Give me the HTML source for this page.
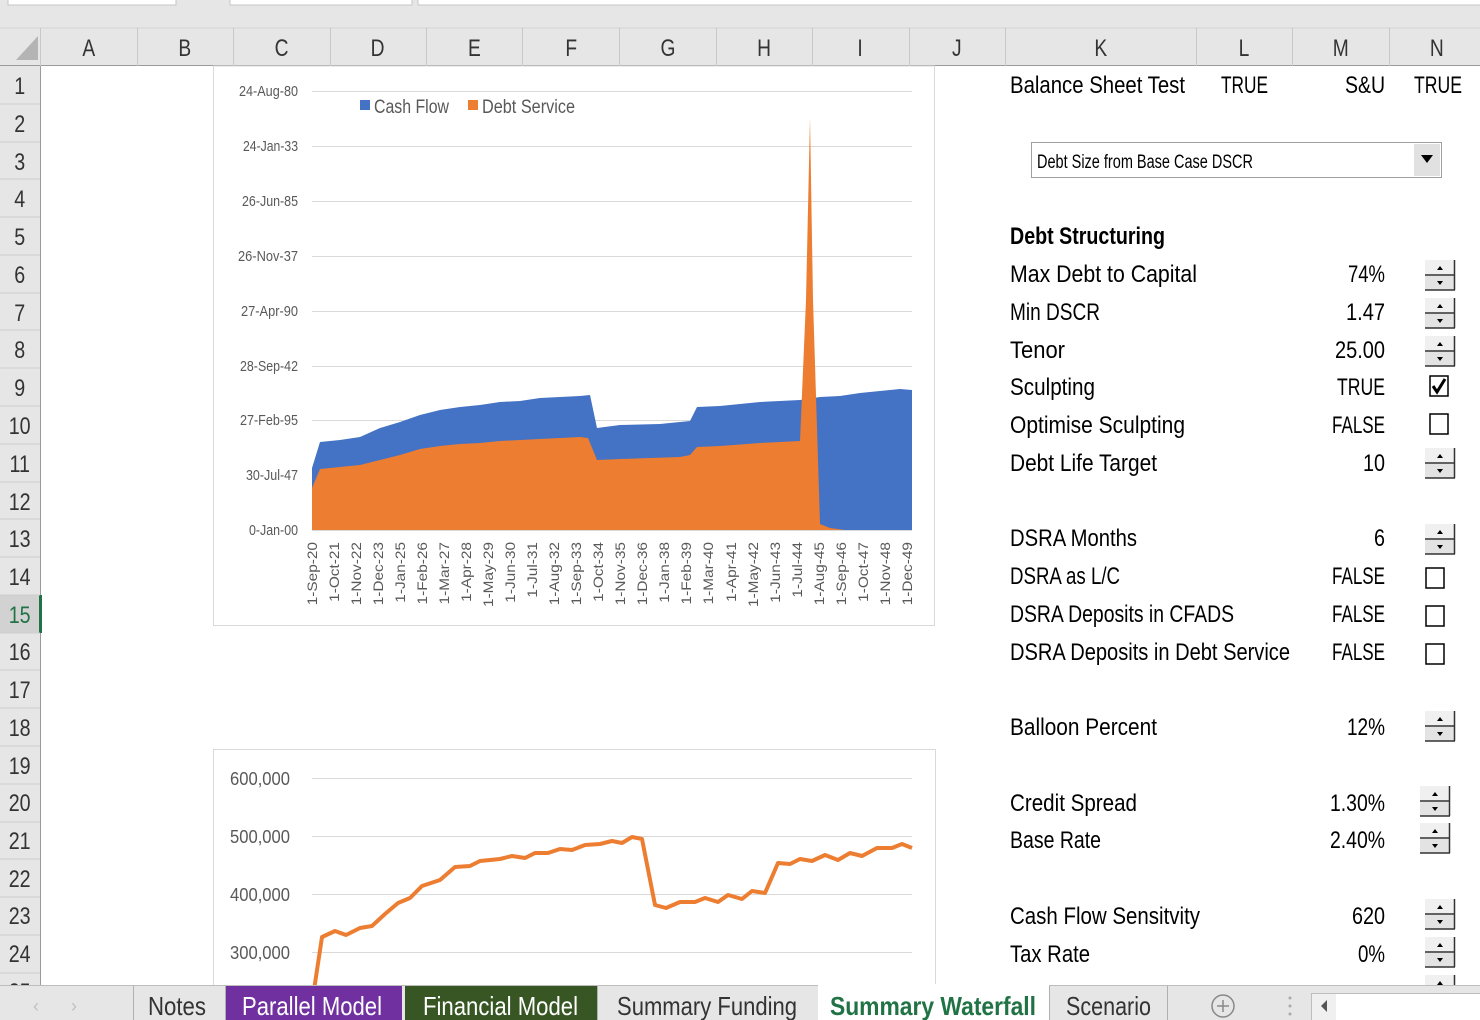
<!DOCTYPE html>
<html><head><meta charset="utf-8"><style>
html,body{margin:0;padding:0;width:1480px;height:1020px;overflow:hidden;background:#fff}
svg{display:block}
text{font-family:"Liberation Sans Narrow","Liberation Sans",sans-serif}
</style></head><body>
<svg width="1480" height="1020" viewBox="0 0 1480 1020" xmlns="http://www.w3.org/2000/svg">
<rect x="0" y="0" width="1480" height="66" fill="#e6e6e6"/>
<rect x="8" y="-2" width="168" height="7" fill="#fff" stroke="#c6c6c6"/>
<rect x="230" y="-2" width="182" height="7" fill="#fff" stroke="#c6c6c6"/>
<rect x="418" y="-2" width="1070" height="7" fill="#fff" stroke="#c6c6c6"/>
<line x1="0" y1="28" x2="1480" y2="28" stroke="#d4d4d4"/>
<line x1="0" y1="65.5" x2="1480" y2="65.5" stroke="#9b9b9b"/>
<polygon points="38,36 38,60 16,60" fill="#b4b4b4"/>
<g stroke="#c8c8c8">
<line x1="40.5" y1="28" x2="40.5" y2="66"/><line x1="137.5" y1="28" x2="137.5" y2="66"/><line x1="233.5" y1="28" x2="233.5" y2="66"/><line x1="330.5" y1="28" x2="330.5" y2="66"/><line x1="426.5" y1="28" x2="426.5" y2="66"/><line x1="522.5" y1="28" x2="522.5" y2="66"/><line x1="619.5" y1="28" x2="619.5" y2="66"/><line x1="716.5" y1="28" x2="716.5" y2="66"/><line x1="812.5" y1="28" x2="812.5" y2="66"/><line x1="909.5" y1="28" x2="909.5" y2="66"/><line x1="1005.5" y1="28" x2="1005.5" y2="66"/><line x1="1196.5" y1="28" x2="1196.5" y2="66"/><line x1="1292.5" y1="28" x2="1292.5" y2="66"/><line x1="1389.5" y1="28" x2="1389.5" y2="66"/>
</g>
<g font-size="24" fill="#333" text-anchor="middle" transform="scale(0.8,1)">
<text x="111" y="56">A</text><text x="231" y="56">B</text><text x="352" y="56">C</text><text x="472" y="56">D</text><text x="593" y="56">E</text><text x="714" y="56">F</text><text x="835" y="56">G</text><text x="955" y="56">H</text><text x="1075" y="56">I</text><text x="1196" y="56">J</text><text x="1376" y="56">K</text><text x="1555" y="56">L</text><text x="1676" y="56">M</text><text x="1796" y="56">N</text>
</g>
<rect x="0" y="66" width="40" height="920" fill="#e6e6e6"/>
<rect x="0" y="595" width="40" height="38" fill="#d2d2d2"/>
<line x1="40.5" y1="66" x2="40.5" y2="986" stroke="#9b9b9b"/>
<rect x="39" y="595" width="3" height="38" fill="#217346"/>
<g stroke="#cfcfcf">
<line x1="0" y1="104" x2="40" y2="104"/><line x1="0" y1="142" x2="40" y2="142"/><line x1="0" y1="179" x2="40" y2="179"/><line x1="0" y1="217" x2="40" y2="217"/><line x1="0" y1="255" x2="40" y2="255"/><line x1="0" y1="293" x2="40" y2="293"/><line x1="0" y1="330" x2="40" y2="330"/><line x1="0" y1="368" x2="40" y2="368"/><line x1="0" y1="406" x2="40" y2="406"/><line x1="0" y1="444" x2="40" y2="444"/><line x1="0" y1="482" x2="40" y2="482"/><line x1="0" y1="519" x2="40" y2="519"/><line x1="0" y1="557" x2="40" y2="557"/><line x1="0" y1="595" x2="40" y2="595"/><line x1="0" y1="633" x2="40" y2="633"/><line x1="0" y1="670" x2="40" y2="670"/><line x1="0" y1="708" x2="40" y2="708"/><line x1="0" y1="746" x2="40" y2="746"/><line x1="0" y1="784" x2="40" y2="784"/><line x1="0" y1="822" x2="40" y2="822"/><line x1="0" y1="859" x2="40" y2="859"/><line x1="0" y1="897" x2="40" y2="897"/><line x1="0" y1="935" x2="40" y2="935"/><line x1="0" y1="973" x2="40" y2="973"/>
</g>
<g font-size="24" fill="#333" text-anchor="middle" transform="scale(0.82,1)">
<text x="24" y="94">1</text><text x="24" y="132">2</text><text x="24" y="170">3</text><text x="24" y="207">4</text><text x="24" y="245">5</text><text x="24" y="283">6</text><text x="24" y="321">7</text><text x="24" y="358">8</text><text x="24" y="396">9</text><text x="24" y="434">10</text><text x="24" y="472">11</text><text x="24" y="510">12</text><text x="24" y="547">13</text><text x="24" y="585">14</text><text x="24" y="623" fill="#217346">15</text><text x="24" y="660">16</text><text x="24" y="698">17</text><text x="24" y="736">18</text><text x="24" y="774">19</text><text x="24" y="811">20</text><text x="24" y="849">21</text><text x="24" y="887">22</text><text x="24" y="924">23</text><text x="24" y="962">24</text><text x="24" y="1000">25</text>
</g>

<rect x="213.5" y="66" width="721" height="559.5" fill="#fff" stroke="#d9d9d9"/>
<g stroke="#d9d9d9"><line x1="312" y1="91.5" x2="912" y2="91.5"/><line x1="312" y1="146.5" x2="912" y2="146.5"/><line x1="312" y1="201.5" x2="912" y2="201.5"/><line x1="312" y1="256.5" x2="912" y2="256.5"/><line x1="312" y1="311.5" x2="912" y2="311.5"/><line x1="312" y1="366.5" x2="912" y2="366.5"/><line x1="312" y1="420.5" x2="912" y2="420.5"/><line x1="312" y1="475.5" x2="912" y2="475.5"/><line x1="312" y1="530.5" x2="912" y2="530.5"/></g>
<g font-size="15" fill="#595959" lengthAdjust="spacingAndGlyphs">
<text x="239" y="96" textLength="59" lengthAdjust="spacingAndGlyphs">24-Aug-80</text><text x="243" y="151" textLength="55" lengthAdjust="spacingAndGlyphs">24-Jan-33</text><text x="242" y="206" textLength="56" lengthAdjust="spacingAndGlyphs">26-Jun-85</text><text x="238" y="261" textLength="60" lengthAdjust="spacingAndGlyphs">26-Nov-37</text><text x="241" y="316" textLength="57" lengthAdjust="spacingAndGlyphs">27-Apr-90</text><text x="240" y="371" textLength="58" lengthAdjust="spacingAndGlyphs">28-Sep-42</text><text x="240" y="425" textLength="58" lengthAdjust="spacingAndGlyphs">27-Feb-95</text><text x="246" y="480" textLength="52" lengthAdjust="spacingAndGlyphs">30-Jul-47</text><text x="249" y="535" textLength="49" lengthAdjust="spacingAndGlyphs">0-Jan-00</text>
</g>
<rect x="360" y="100" width="10" height="10" fill="#4472c4"/><text x="374" y="113" font-size="19" fill="#595959" textLength="75" lengthAdjust="spacingAndGlyphs">Cash Flow</text>
<rect x="468" y="100" width="10" height="10" fill="#ed7d31"/><text x="482" y="113" font-size="19" fill="#595959" textLength="93" lengthAdjust="spacingAndGlyphs">Debt Service</text>
<polygon fill="#4472c4" points="312,530 312,468 320,442 340,440 360,437 380,428 400,422 420,415 440,410 460,407 480,405 500,402 520,401 540,398 560,397 580,396 590,395 597,428 620,425 660,424 690,421 697,407 720,406 760,402 800,400 820,397 840,396 860,393 880,391 900,389 912,390 912,530"/>
<polygon fill="#ed7d31" points="312,530 312,488 320,469 340,467 360,465 380,460 400,455 420,449 440,446 460,444 480,443 500,441 520,440 540,439 560,438 580,437 588,438 597,460 620,459 650,458 680,457 690,455 697,447 720,446 760,443 800,441 806,300 810,118 813,300 820,524 830,528 845,530"/>
<line x1="312" y1="530.5" x2="912" y2="530.5" stroke="#d9d9d9"/>
<g font-size="14" fill="#595959" text-anchor="end">
<text transform="translate(317,542) rotate(-90) scale(1.1,1)">1-Sep-20</text>
<text transform="translate(339,542) rotate(-90) scale(1.1,1)">1-Oct-21</text>
<text transform="translate(361,542) rotate(-90) scale(1.1,1)">1-Nov-22</text>
<text transform="translate(383,542) rotate(-90) scale(1.1,1)">1-Dec-23</text>
<text transform="translate(405,542) rotate(-90) scale(1.1,1)">1-Jan-25</text>
<text transform="translate(427,542) rotate(-90) scale(1.1,1)">1-Feb-26</text>
<text transform="translate(449,542) rotate(-90) scale(1.1,1)">1-Mar-27</text>
<text transform="translate(471,542) rotate(-90) scale(1.1,1)">1-Apr-28</text>
<text transform="translate(493,542) rotate(-90) scale(1.1,1)">1-May-29</text>
<text transform="translate(515,542) rotate(-90) scale(1.1,1)">1-Jun-30</text>
<text transform="translate(537,542) rotate(-90) scale(1.1,1)">1-Jul-31</text>
<text transform="translate(559,542) rotate(-90) scale(1.1,1)">1-Aug-32</text>
<text transform="translate(581,542) rotate(-90) scale(1.1,1)">1-Sep-33</text>
<text transform="translate(603,542) rotate(-90) scale(1.1,1)">1-Oct-34</text>
<text transform="translate(625,542) rotate(-90) scale(1.1,1)">1-Nov-35</text>
<text transform="translate(647,542) rotate(-90) scale(1.1,1)">1-Dec-36</text>
<text transform="translate(669,542) rotate(-90) scale(1.1,1)">1-Jan-38</text>
<text transform="translate(691,542) rotate(-90) scale(1.1,1)">1-Feb-39</text>
<text transform="translate(713,542) rotate(-90) scale(1.1,1)">1-Mar-40</text>
<text transform="translate(736,542) rotate(-90) scale(1.1,1)">1-Apr-41</text>
<text transform="translate(758,542) rotate(-90) scale(1.1,1)">1-May-42</text>
<text transform="translate(780,542) rotate(-90) scale(1.1,1)">1-Jun-43</text>
<text transform="translate(802,542) rotate(-90) scale(1.1,1)">1-Jul-44</text>
<text transform="translate(824,542) rotate(-90) scale(1.1,1)">1-Aug-45</text>
<text transform="translate(846,542) rotate(-90) scale(1.1,1)">1-Sep-46</text>
<text transform="translate(868,542) rotate(-90) scale(1.1,1)">1-Oct-47</text>
<text transform="translate(890,542) rotate(-90) scale(1.1,1)">1-Nov-48</text>
<text transform="translate(912,542) rotate(-90) scale(1.1,1)">1-Dec-49</text>
</g>

<rect x="213.5" y="749.5" width="722" height="260" fill="#fff" stroke="#d9d9d9"/>
<g stroke="#d9d9d9"><line x1="312" y1="778.5" x2="912" y2="778.5"/><line x1="312" y1="836.5" x2="912" y2="836.5"/><line x1="312" y1="894.5" x2="912" y2="894.5"/><line x1="312" y1="952.5" x2="912" y2="952.5"/></g>
<g font-size="18" fill="#595959">
<text x="230" y="785" textLength="60" lengthAdjust="spacingAndGlyphs">600,000</text><text x="230" y="843" textLength="60" lengthAdjust="spacingAndGlyphs">500,000</text><text x="230" y="901" textLength="60" lengthAdjust="spacingAndGlyphs">400,000</text><text x="230" y="959" textLength="60" lengthAdjust="spacingAndGlyphs">300,000</text>
</g>
<polyline fill="none" stroke="#ed7d31" stroke-width="4" stroke-linejoin="round" points="314,990 322,937 335,931 346,935 360,928 372,926 385,914 398,903 410,898 422,886 440,880 455,867 470,866 480,861 500,859 512,856 525,858 535,853 548,853 560,849 572,850 585,845 600,844 612,841 622,843 632,837 642,839 655,905 666,908 680,902 695,902 705,898 718,902 728,895 742,899 752,891 765,893 778,863 790,864 800,859 812,861 825,855 838,860 850,853 862,856 877,848 892,848 902,844 912,848"/>

<g font-size="24" fill="#000">
<text x="1010" y="93" textLength="175" lengthAdjust="spacingAndGlyphs">Balance Sheet Test</text>
<text x="1221" y="93" textLength="47" lengthAdjust="spacingAndGlyphs">TRUE</text>
<text x="1345" y="93" textLength="40" lengthAdjust="spacingAndGlyphs">S&amp;U</text>
<text x="1414" y="93" textLength="48" lengthAdjust="spacingAndGlyphs">TRUE</text>
<text x="1010" y="244" font-weight="bold" textLength="155" lengthAdjust="spacingAndGlyphs">Debt Structuring</text>
<text x="1010" y="282" textLength="187" lengthAdjust="spacingAndGlyphs">Max Debt to Capital</text>
<text x="1010" y="320" textLength="90" lengthAdjust="spacingAndGlyphs">Min DSCR</text>
<text x="1010" y="358" textLength="55" lengthAdjust="spacingAndGlyphs">Tenor</text>
<text x="1010" y="395" textLength="85" lengthAdjust="spacingAndGlyphs">Sculpting</text>
<text x="1010" y="433" textLength="175" lengthAdjust="spacingAndGlyphs">Optimise Sculpting</text>
<text x="1010" y="471" textLength="147" lengthAdjust="spacingAndGlyphs">Debt Life Target</text>
<text x="1010" y="546" textLength="127" lengthAdjust="spacingAndGlyphs">DSRA Months</text>
<text x="1010" y="584" textLength="110" lengthAdjust="spacingAndGlyphs">DSRA as L/C</text>
<text x="1010" y="622" textLength="224" lengthAdjust="spacingAndGlyphs">DSRA Deposits in CFADS</text>
<text x="1010" y="660" textLength="280" lengthAdjust="spacingAndGlyphs">DSRA Deposits in Debt Service</text>
<text x="1010" y="735" textLength="147" lengthAdjust="spacingAndGlyphs">Balloon Percent</text>
<text x="1010" y="811" textLength="127" lengthAdjust="spacingAndGlyphs">Credit Spread</text>
<text x="1010" y="848" textLength="91" lengthAdjust="spacingAndGlyphs">Base Rate</text>
<text x="1010" y="924" textLength="190" lengthAdjust="spacingAndGlyphs">Cash Flow Sensitvity</text>
<text x="1010" y="962" textLength="80" lengthAdjust="spacingAndGlyphs">Tax Rate</text>
</g>
<g font-size="24" fill="#000">
<text x="1348" y="282" textLength="37" lengthAdjust="spacingAndGlyphs">74%</text>
<text x="1346" y="320" textLength="39" lengthAdjust="spacingAndGlyphs">1.47</text>
<text x="1335" y="358" textLength="50" lengthAdjust="spacingAndGlyphs">25.00</text>
<text x="1337" y="395" textLength="48" lengthAdjust="spacingAndGlyphs">TRUE</text>
<text x="1332" y="433" textLength="53" lengthAdjust="spacingAndGlyphs">FALSE</text>
<text x="1363" y="471" textLength="22" lengthAdjust="spacingAndGlyphs">10</text>
<text x="1374" y="546" textLength="11" lengthAdjust="spacingAndGlyphs">6</text>
<text x="1332" y="584" textLength="53" lengthAdjust="spacingAndGlyphs">FALSE</text>
<text x="1332" y="622" textLength="53" lengthAdjust="spacingAndGlyphs">FALSE</text>
<text x="1332" y="660" textLength="53" lengthAdjust="spacingAndGlyphs">FALSE</text>
<text x="1347" y="735" textLength="38" lengthAdjust="spacingAndGlyphs">12%</text>
<text x="1330" y="811" textLength="55" lengthAdjust="spacingAndGlyphs">1.30%</text>
<text x="1330" y="848" textLength="55" lengthAdjust="spacingAndGlyphs">2.40%</text>
<text x="1352" y="924" textLength="33" lengthAdjust="spacingAndGlyphs">620</text>
<text x="1358" y="962" textLength="27" lengthAdjust="spacingAndGlyphs">0%</text>
</g>
<rect x="1031.5" y="142.5" width="410" height="35" fill="#fff" stroke="#a0a0a0"/>
<rect x="1414" y="144" width="26" height="32" fill="#e1e1e1"/>
<polygon points="1421,155 1433,155 1427,163" fill="#000"/>
<text x="1037" y="168" font-size="19" fill="#000" textLength="216" lengthAdjust="spacingAndGlyphs">Debt Size from Base Case DSCR</text>
<defs>
<g id="sp">
<rect x="0" y="0" width="30" height="30" fill="#f0f0f0"/>
<rect x="0" y="16" width="30" height="14" fill="#e3e3e3"/>
<line x1="0" y1="15" x2="30" y2="15" stroke="#333" stroke-width="1.5"/>
<line x1="0" y1="30" x2="30" y2="30" stroke="#333" stroke-width="1.5"/>
<line x1="29.5" y1="0" x2="29.5" y2="30" stroke="#333" stroke-width="1.5"/>
<polygon points="12,10 18,10 15,6" fill="#000"/>
<polygon points="12,21 18,21 15,25" fill="#000"/>
</g>
</defs>
<use href="#sp" x="1425" y="260"/>
<use href="#sp" x="1425" y="298"/>
<use href="#sp" x="1425" y="336"/>
<use href="#sp" x="1425" y="448"/>
<use href="#sp" x="1425" y="524"/>
<use href="#sp" x="1425" y="711"/>
<use href="#sp" x="1420" y="786"/>
<use href="#sp" x="1420" y="823"/>
<use href="#sp" x="1425" y="899"/>
<use href="#sp" x="1425" y="937"/>
<use href="#sp" x="1425" y="975"/>
<rect x="1430" y="376" width="18" height="20" fill="#fff" stroke="#000" stroke-width="1.5"/>
<path d="M1433,386 L1437,392 L1445,379" fill="none" stroke="#000" stroke-width="3"/>
<rect x="1430" y="414" width="18" height="20" fill="#fff" stroke="#000" stroke-width="1.5"/>
<rect x="1426" y="568" width="18" height="20" fill="#fff" stroke="#000" stroke-width="1.5"/>
<rect x="1426" y="606" width="18" height="20" fill="#fff" stroke="#000" stroke-width="1.5"/>
<rect x="1426" y="644" width="18" height="20" fill="#fff" stroke="#000" stroke-width="1.5"/>

<rect x="0" y="985" width="1480" height="35" fill="#e6e6e6"/>
<line x1="0" y1="985.5" x2="1480" y2="985.5" stroke="#bdbdbd"/>
<text x="36" y="1012" font-size="18" fill="#c0c0c0" text-anchor="middle">‹</text>
<text x="74" y="1012" font-size="18" fill="#c0c0c0" text-anchor="middle">›</text>
<g stroke="#b0b0b0"><line x1="133.5" y1="986" x2="133.5" y2="1020"/><line x1="225.5" y1="986" x2="225.5" y2="1020"/><line x1="597.5" y1="986" x2="597.5" y2="1020"/><line x1="1049.5" y1="986" x2="1049.5" y2="1020"/><line x1="1167.5" y1="986" x2="1167.5" y2="1020"/></g>
<rect x="226" y="986" width="176" height="34" fill="#7030a0"/>
<rect x="405" y="986" width="192" height="34" fill="#375623"/>
<rect x="818" y="984" width="231" height="36" fill="#fff"/>
<g font-size="26" fill="#333">
<text x="148" y="1015" textLength="58" lengthAdjust="spacingAndGlyphs">Notes</text>
<text x="242" y="1015" fill="#fff" textLength="140" lengthAdjust="spacingAndGlyphs">Parallel Model</text>
<text x="423" y="1015" fill="#fff" textLength="155" lengthAdjust="spacingAndGlyphs">Financial Model</text>
<text x="617" y="1015" textLength="180" lengthAdjust="spacingAndGlyphs">Summary Funding</text>
<text x="830" y="1015" fill="#217346" font-weight="bold" textLength="206" lengthAdjust="spacingAndGlyphs">Summary Waterfall</text>
<text x="1066" y="1015" textLength="85" lengthAdjust="spacingAndGlyphs">Scenario</text>
</g>
<circle cx="1223" cy="1006" r="11" fill="none" stroke="#888" stroke-width="1.5"/>
<path d="M1217,1006 H1229 M1223,1000 V1012" stroke="#888" stroke-width="1.5"/>
<g fill="#aaa"><circle cx="1290" cy="998" r="1.5"/><circle cx="1290" cy="1006" r="1.5"/><circle cx="1290" cy="1014" r="1.5"/></g>
<rect x="1311.5" y="993.5" width="170" height="30" fill="#fff" stroke="#bdbdbd"/>
<rect x="1312" y="994" width="24" height="28" fill="#f0f0f0"/>
<polygon points="1327,1000 1327,1012 1321,1006" fill="#555"/>
</svg>
</body></html>
